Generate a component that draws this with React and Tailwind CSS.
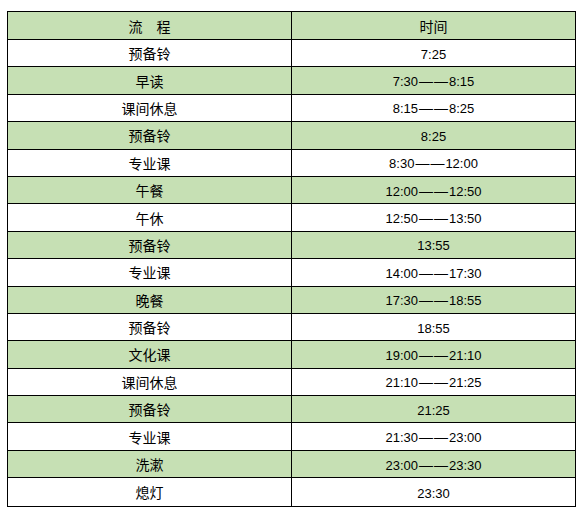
import React from 'react';

const rows = [
    ['预备铃', '7:25'],
    ['早读', '7:30', '8:15'],
    ['课间休息', '8:15', '8:25'],
    ['预备铃', '8:25'],
    ['专业课', '8:30', '12:00'],
    ['午餐', '12:00', '12:50'],
    ['午休', '12:50', '13:50'],
    ['预备铃', '13:55'],
    ['专业课', '14:00', '17:30'],
    ['晚餐', '17:30', '18:55'],
    ['预备铃', '18:55'],
    ['文化课', '19:00', '21:10'],
    ['课间休息', '21:10', '21:25'],
    ['预备铃', '21:25'],
    ['专业课', '21:30', '23:00'],
    ['洗漱', '23:00', '23:30'],
    ['熄灯', '23:30'],
];

const Time = ({ from, to }) => (
    <span className="font-['Liberation_Sans','Noto_Sans_CJK_SC',sans-serif] text-[13px]">
        {from}
        {to && (
            <>
                <span className="font-['Liberation_Sans',sans-serif] text-[14px] tracking-[1px] ml-[1px]">——</span>
                {to}
            </>
        )}
    </span>
);

export default function App() {
    return (
        <div className="bg-white w-[581px] h-[517px] pt-[11px] pl-[7px] font-['Noto_Sans_CJK_SC',sans-serif] text-[14px] text-black">
            <table className="w-[569px] border-collapse table-fixed">
                <thead>
                    <tr className="h-[28px] bg-[#c6e0b4]">
                        <th className="border border-black font-normal text-center leading-none">流　程</th>
                        <th className="border border-black font-normal text-center leading-none">时间</th>
                    </tr>
                </thead>
                <tbody>
                    {rows.map(([name, from, to], i) => (
                        <tr
                            key={i}
                            className={`${i === rows.length - 1 ? 'h-[29px]' : 'h-[27.4px]'} ${i % 2 === 1 ? 'bg-[#c6e0b4]' : 'bg-white'}`}
                        >
                            <td className="border border-black text-center leading-none p-0">{name}</td>
                            <td className="border border-black text-center leading-none p-0">
                                <Time from={from} to={to} />
                            </td>
                        </tr>
                    ))}
                </tbody>
            </table>
        </div>
    );
}
